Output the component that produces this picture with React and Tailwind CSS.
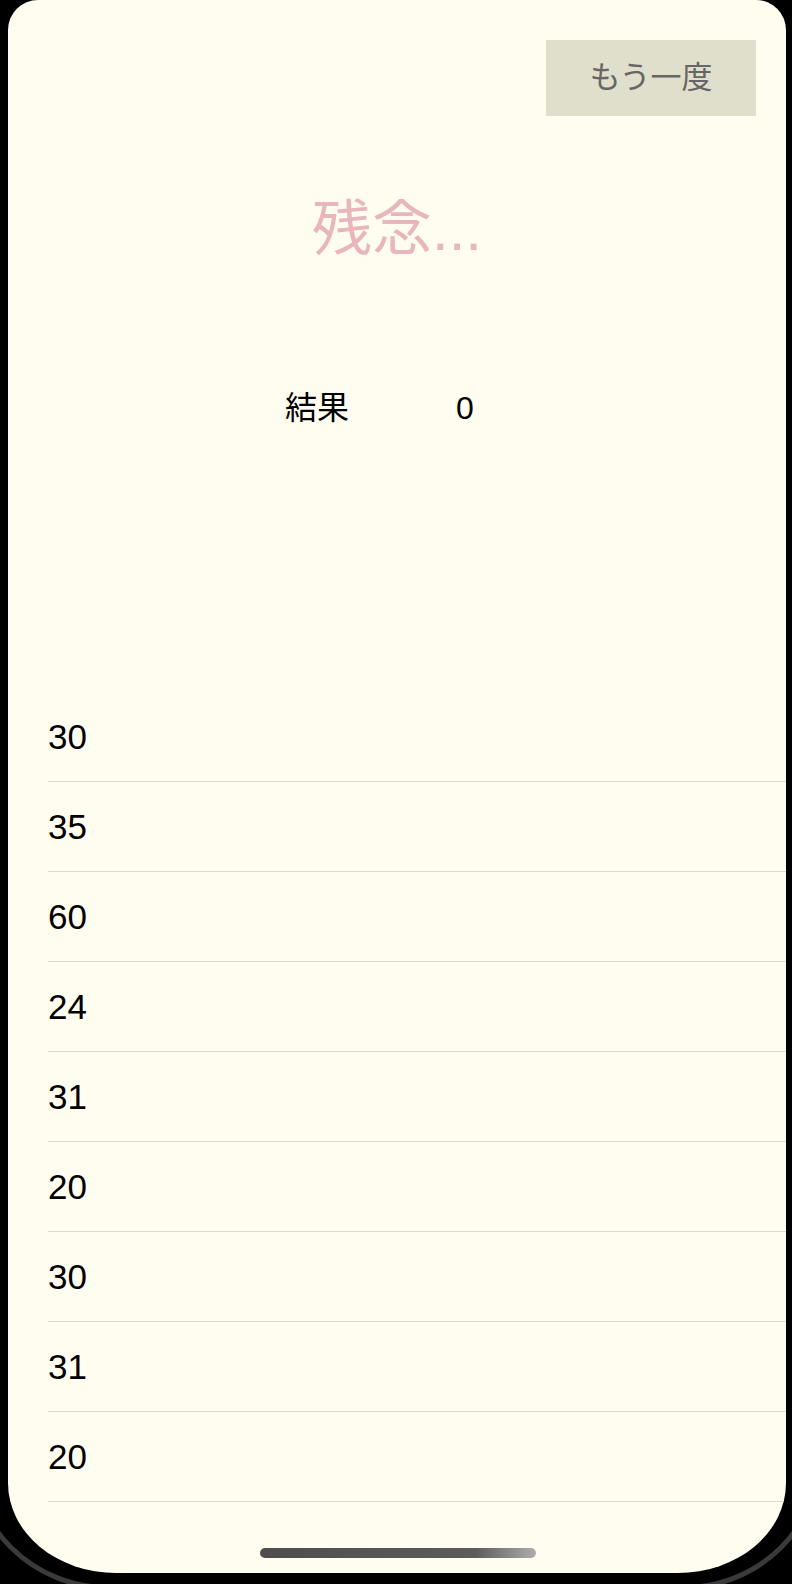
const SCORES = [30, 35, 60, 24, 31, 20, 30, 31, 20]

const FONT = "font-['Liberation_Sans','Noto_Sans_CJK_JP',sans-serif]"

function ScoreRow({value}) {
    return (
        <div className="ml-[40px] h-[90px] border-b border-[#dad9cd] flex items-center">
            <span className="text-[35px] leading-none text-black">{value}</span>
        </div>
    )
}

export default function App() {
    return (
        <div className={`relative w-[792px] h-[1584px] bg-black overflow-hidden ${FONT}`}>
            {/* device edge glimpsed at the bottom corners */}
            <div className="absolute left-[-32px] right-[-32px] top-[-60px] bottom-[-6px] rounded-[140px] border-[5px] border-[#3a3a3a]"/>

            <div className="relative ml-[8px] w-[778px] h-[1573px] bg-[#fffdf0] rounded-t-[30px] rounded-bl-[108px_90px] rounded-br-[108px_90px] overflow-hidden flex flex-col">
                <div className="flex justify-end pt-[40px] pr-[30px]">
                    <button className="w-[210px] h-[76px] bg-[#e0dfcb] text-[#666666] text-[31px] flex items-center justify-center">
                        もう一度
                    </button>
                </div>

                <h1 className="mt-[78px] text-center text-[60px] leading-[72px] text-[#e9b6be] font-normal">
                    残念...
                </h1>

                <div className="mt-[122px] flex items-center pl-[277px] h-[40px] text-[32px] text-black">
                    <span className="w-[171px]">結果</span>
                    <span>0</span>
                </div>

                <div className="mt-[264px] flex flex-col">
                    {SCORES.map((s, i) => (
                        <ScoreRow key={i} value={s}/>
                    ))}
                </div>

                <div className="absolute left-[252px] top-[1548px] w-[276px] h-[10px] rounded-full bg-[linear-gradient(90deg,#4e4e4e_0%,#5c5c5c_78%,#adadad_100%)]"/>
            </div>
        </div>
    )
}
